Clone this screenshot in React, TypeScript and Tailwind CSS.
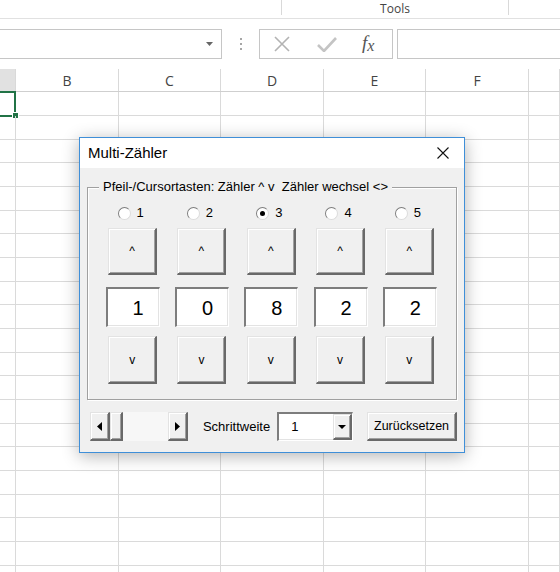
import React from "react";

const raised =
  "bg-[#f0f0f0] border-t border-l border-t-[#e3e3e3] border-l-[#e3e3e3] border-r-2 border-b-2 border-r-[#696969] border-b-[#696969] shadow-[inset_1px_1px_0_#ffffff,inset_-1px_-1px_0_#a0a0a0]";
const sunken =
  "bg-white border-t-2 border-l-2 border-b border-r border-t-[#7d7d7d] border-l-[#7d7d7d] border-b-[#ffffff] border-r-[#ffffff] shadow-[inset_-1px_-1px_0_#e3e3e3]";

const colW = ["w-[16px]", "w-[103px]", "w-[102px]", "w-[103px]", "w-[102px]", "w-[103px]", "flex-1"];
const colLabels = ["", "B", "C", "D", "E", "F", ""];
const rowH = ["h-[24px]", "h-[24px]", "h-[23px]"];

const values = [1, 0, 8, 2, 2];

function Radio({ checked, label }: { checked: boolean; label: string }) {
  return (
    <div className="flex items-center h-[14px] -ml-[4px]">
      <span className="w-[13px] h-[13px] rounded-full bg-white border border-t-[#7d7d7d] border-l-[#7d7d7d] border-r-[#dcdcdc] border-b-[#dcdcdc] flex items-center justify-center">
        {checked && <span className="w-[5px] h-[5px] rounded-full bg-black" />}
      </span>
      <span className="ml-[6px] text-[13px] leading-[14px] text-black">{label}</span>
    </div>
  );
}

function Spreadsheet() {
  return (
    <div className="flex flex-col">
      {/* ribbon bottom strip */}
      <div className="h-[19px] border-b border-[#e1e1e1] flex">
        <div className="w-[281px]" />
        <div className="w-[228px] h-[15px] border-l border-r border-[#d9d9d9] flex justify-center">
          <span className="font-['Open_Sans'] text-[12px] leading-[14px] pt-[2px] text-[#444]">Tools</span>
        </div>
      </div>
      {/* formula bar */}
      <div className="mt-[10px] h-[30px] flex">
        <div className="w-[222px] h-full border-y border-r border-[#c6c6c6] flex items-center justify-end pr-[8px]">
          <svg width="7" height="4" viewBox="0 0 7 4">
            <polygon points="0,0 7,0 3.5,4" fill="#666" />
          </svg>
        </div>
        <div className="w-[37px] flex flex-col items-center justify-center gap-[3px]">
          <span className="w-[2px] h-[2px] bg-[#a6a6a6]" />
          <span className="w-[2px] h-[2px] bg-[#a6a6a6]" />
          <span className="w-[2px] h-[2px] bg-[#a6a6a6]" />
        </div>
        <div className="w-[134px] h-full border border-[#c6c6c6] flex items-center pl-[13px]">
          <svg width="18" height="16" viewBox="0 0 18 16">
            <path d="M2 1 L16 15 M16 1 L2 15" stroke="#b3b3b3" strokeWidth="1.6" fill="none" />
          </svg>
          <svg className="ml-[26px]" width="20" height="16" viewBox="0 0 20 16">
            <path d="M1 9 L7 15 L19 2" stroke="#c4c4c4" strokeWidth="2.6" fill="none" />
          </svg>
          <span className="ml-[25px] font-['Liberation_Serif'] italic text-[19px] leading-[20px] text-[#555] -mt-[2px]">
            f<span className="text-[16px] relative top-[2px]">x</span>
          </span>
        </div>
        <div className="ml-[4px] flex-1 h-full border-y border-l border-[#c6c6c6]" />
      </div>
      {/* column header */}
      <div className="mt-[10px] h-[23px] flex border-b border-[#cfcfcf]">
        {colLabels.map((l, i) => (
          <div
            key={i}
            className={`${colW[i]} h-full border-r border-[#d9d9d9] flex items-center justify-center font-['Open_Sans'] text-[14px] text-[#444] ${i === 0 ? "bg-[#e1e1e1]" : "bg-white"}`}
          >
            {l}
          </div>
        ))}
      </div>
      {/* rows */}
      {Array.from({ length: 21 }).map((_, r) => (
        <div key={r} className={`${rowH[r % 3]} flex border-b border-[#dadada]`}>
          {colW.map((w, c) => (
            <div key={c} className={`${w} h-full border-r border-[#dadada] relative`}>
              {r === 0 && c === 0 && (
                <>
                  <div className="absolute left-[-3px] top-[-1px] w-[19px] h-[26px] border-2 border-[#217346]" />
                  <div className="absolute left-[12px] top-[20px] w-[7px] h-[7px] bg-[#217346] border border-white" />
                </>
              )}
            </div>
          ))}
        </div>
      ))}
    </div>
  );
}

function Dialog() {
  return (
    <div className="absolute left-[79px] top-[137px] w-[386px] h-[316px] border border-[#3f8fd8] bg-[#f0f0f0] shadow-[0_3px_16px_rgba(0,0,0,0.3)] flex flex-col font-['Liberation_Sans'] text-black">
      <div className="h-[30px] bg-white flex items-center justify-between pl-[8px] pr-[15px]">
        <span className="text-[15px] leading-[18px]">Multi-Zähler</span>
        <svg width="12" height="12" viewBox="0 0 12 12">
          <path d="M0.5 0.5 L11.5 11.5 M11.5 0.5 L0.5 11.5" stroke="#111" strokeWidth="1.1" fill="none" />
        </svg>
      </div>
      <div className="flex-1 flex flex-col px-[7px]">
        {/* frame */}
        <div className="relative mt-[19px] border border-[#a0a0a0] shadow-[inset_1px_1px_0_#ffffff,1px_1px_0_#ffffff]">
          <span className="absolute left-[11px] top-[-9px] px-[4px] bg-[#f0f0f0] text-[13px] leading-[16px] whitespace-pre">
            {"Pfeil-/Cursortasten: Zähler ^ v  Zähler wechsel <>"}
          </span>
          <div className="flex pl-[10px] pt-[18px] pb-[15px]">
            {values.map((v, i) => (
              <div key={i} className="w-[69.3px] flex flex-col items-center">
                <Radio checked={i === 2} label={String(i + 1)} />
                <div className={`mt-[8px] w-[49px] h-[47px] ${raised} flex items-center justify-center text-[12px]`}>
                  ^
                </div>
                <div className={`mt-[12px] w-[54px] h-[40px] ${sunken} flex items-center justify-center pl-[10px] text-[20px]`}>
                  {v}
                </div>
                <div className={`mt-[9px] w-[49px] h-[48px] ${raised} flex items-center justify-center text-[12px]`}>
                  v
                </div>
              </div>
            ))}
          </div>
        </div>
        {/* bottom row */}
        <div className="mt-[12px] h-[29px] flex items-center ml-[3px]">
          <div className="w-[98px] h-full flex">
            <div className={`w-[20px] h-full ${raised} flex items-center justify-center`}>
              <svg width="5" height="9" viewBox="0 0 5 9">
                <polygon points="5,0 5,9 0,4.5" fill="#000" />
              </svg>
            </div>
            <div className={`w-[13px] h-full ${raised}`} />
            <div className="flex-1 h-full bg-[#f7f7f7]" />
            <div className={`w-[20px] h-full ${raised} flex items-center justify-center`}>
              <svg width="5" height="9" viewBox="0 0 5 9">
                <polygon points="0,0 0,9 5,4.5" fill="#000" />
              </svg>
            </div>
          </div>
          <span className="ml-[15px] text-[13px]">Schrittweite</span>
          <div className={`ml-[7px] w-[76px] h-full ${sunken} flex items-stretch`}>
            <span className="flex-1 flex items-center pl-[12px] text-[13px]">1</span>
            <div className={`w-[19px] ${raised} flex items-center justify-center`}>
              <svg width="8" height="4" viewBox="0 0 8 4">
                <polygon points="0,0 8,0 4,4" fill="#000" />
              </svg>
            </div>
          </div>
          <div className={`ml-[14px] w-[90px] h-full ${raised} flex items-center justify-center text-[12.5px]`}>
            Zurücksetzen
          </div>
        </div>
      </div>
    </div>
  );
}

export default function App() {
  return (
    <div className="relative w-[560px] h-[572px] overflow-hidden bg-white font-['Liberation_Sans']">
      <Spreadsheet />
      <Dialog />
    </div>
  );
}
